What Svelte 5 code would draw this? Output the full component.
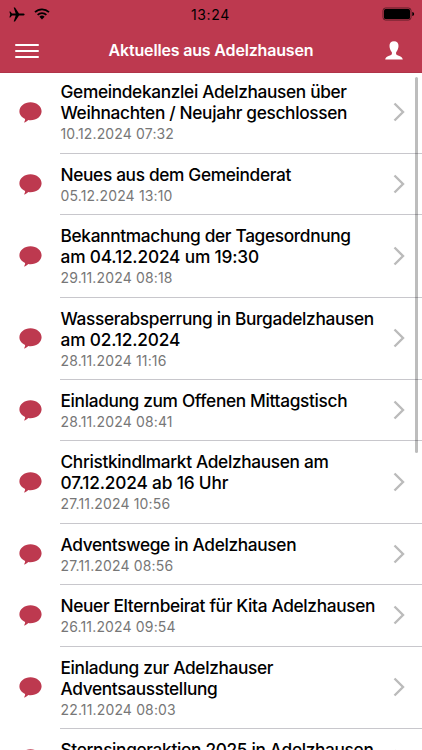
<script lang="ts">
  type NewsItem = { lines: string[]; date: string };

  const news: NewsItem[] = [
    { lines: ['Gemeindekanzlei Adelzhausen über', 'Weihnachten / Neujahr geschlossen'], date: '10.12.2024 07:32' },
    { lines: ['Neues aus dem Gemeinderat'], date: '05.12.2024 13:10' },
    { lines: ['Bekanntmachung der Tagesordnung', 'am 04.12.2024 um 19:30'], date: '29.11.2024 08:18' },
    { lines: ['Wasserabsperrung in Burgadelzhausen', 'am 02.12.2024'], date: '28.11.2024 11:16' },
    { lines: ['Einladung zum Offenen Mittagstisch'], date: '28.11.2024 08:41' },
    { lines: ['Christkindlmarkt Adelzhausen am', '07.12.2024 ab 16 Uhr'], date: '27.11.2024 10:56' },
    { lines: ['Adventswege in Adelzhausen'], date: '27.11.2024 08:56' },
    { lines: ['Neuer Elternbeirat für Kita Adelzhausen'], date: '26.11.2024 09:54' },
    { lines: ['Einladung zur Adelzhauser', 'Adventsausstellung'], date: '22.11.2024 08:03' },
    { lines: ['Sternsingeraktion 2025 in Adelzhausen'], date: '' }
  ];

  const hasDate = (line: string) => /\d\.\d/.test(line);
</script>

<div class="screen">
  <header>
    <div class="status-bar">
      <div class="status-left">
        <svg class="plane" viewBox="0 0 16 15" width="16" height="15">
          <path d="M15.6 7.500c0-.6-.7-1-1.700-1H10L6 .6H4.700l2 5.900H3L1.300 4.400H.4l.8 3.100-.8 3.100h.9L3 8.500h3.700l-2 5.900H6l4-5.900h3.900c1 0 1.700-.4 1.700-1z" />
        </svg>
        <svg class="wifi" viewBox="0 0 16 12" width="16" height="12">
          <path d="M1 4.200a10 10 0 0 1 14 0M3.600 6.900a6.200 6.200 0 0 1 8.800 0" />
          <path class="solid" d="M5.400 8.800a3.700 3.700 0 0 1 5.200 0L8 11.500z" />
        </svg>
      </div>
      <div class="clock">13:24</div>
      <div class="status-right">
        <svg viewBox="0 0 33 14" width="33" height="14">
          <rect class="shell" x="1" y="1" width="28" height="12" rx="2.500" />
          <rect x="2" y="2" width="26" height="10" rx="1.500" />
          <path d="M30.300 5c1.300.3 1.800 1 1.800 2s-.5 1.700-1.800 2z" />
        </svg>
      </div>
    </div>
    <div class="nav-bar">
      <button class="menu" aria-label="Menü">
        <span></span><span></span><span></span>
      </button>
      <h1>Aktuelles aus Adelzhausen</h1>
      <button class="profile" aria-label="Profil">
        <svg viewBox="0 0 18 19" width="18" height="19">
          <path d="M9 .3c3 0 4.600 1.900 4.500 4.800-.1 2.500-.9 4.500-2.200 5.900-.4.500-.3 2.300.3 2.800 1 .9 5.900 1.300 6.200 4.800H.2c.3-3.500 5.200-3.900 6.200-4.800.6-.5.7-2.300.3-2.800-1.300-1.400-2.100-3.400-2.200-5.900C4.400 2.200 6 .3 9 .3z" />
        </svg>
      </button>
    </div>
  </header>

  <main>
    {#each news as item}
      <article>
        <div class="bubble">
          <svg viewBox="0 0 23 21" width="23" height="21">
            <path d="M11.500.3C17.700.3 22.600 4.300 22.600 9.300s-4.900 9-11.100 9c-.7 0-1.500-.1-2.200-.2-1 1.200-2.600 2.200-4.400 2.500.7-1 1.200-2.300 1.200-3.600C2.700 15.500.4 12.600.4 9.300.4 4.300 5.300.3 11.500.3z" />
          </svg>
        </div>
        <div class="content">
          <div class="text">
            <h2>
              {#each item.lines as line}
                <span class:numeric={hasDate(line)}>{line}</span>
              {/each}
            </h2>
            <time>{item.date}</time>
          </div>
          <svg class="chevron" viewBox="0 0 12 20" width="12" height="20">
            <path d="M1.500 1.500 10 10l-8.500 8.500" />
          </svg>
        </div>
      </article>
    {/each}
    <div class="scrollbar"></div>
  </main>
</div>

<style>
  :global(body) {
    background: #fff;
    overflow: hidden;
  }

  .screen {
    width: 422px;
    height: 750px;
    display: flex;
    flex-direction: column;
    overflow: hidden;
    background: #fff;
    font-family: Inter, 'Liberation Sans', sans-serif;
  }

  header {
    height: 72.5px;
    flex-shrink: 0;
    box-sizing: border-box;
    background: #bd394f;
    border-bottom: 1px solid #b03449;
  }

  .status-bar {
    height: 28px;
    display: grid;
    grid-template-columns: 1fr auto 1fr;
    align-items: center;
    padding: 0 7px 0 9px;
  }

  .status-left {
    display: flex;
    align-items: center;
    gap: 9px;
  }

  .wifi {
    fill: none;
    stroke: #000;
    stroke-width: 1.7;
  }

  .wifi .solid {
    fill: #000;
    stroke: none;
  }

  .clock {
    font-size: 14px;
    letter-spacing: 0.7px;
    margin-right: 3px;
  }

  .status-right {
    display: flex;
    justify-content: flex-end;
  }

  .shell {
    fill: none;
    stroke: #5c1c27;
    stroke-width: 1;
  }

  .nav-bar {
    height: 44px;
    display: grid;
    grid-template-columns: 1fr auto 1fr;
    align-items: center;
    padding: 0 15px;
  }

  button {
    padding: 0;
    border: 0;
    background: none;
  }

  .menu {
    width: 24px;
    display: flex;
    flex-direction: column;
    gap: 4px;
    margin-top: 1px;
  }

  .menu span {
    height: 2px;
    border-radius: 1px;
    background: #fff;
  }

  h1 {
    margin: 0;
    font-size: 16px;
    font-weight: 600;
    letter-spacing: -0.17px;
    color: #fff;
    white-space: nowrap;
  }

  .profile {
    justify-self: end;
    display: flex;
    margin-right: 4px;
    fill: #fff;
  }

  main {
    position: relative;
    flex: 1;
    min-height: 0;
    overflow: hidden;
  }

  article {
    display: flex;
  }

  article:first-child {
    margin-top: -1px;
  }

  .bubble {
    width: 60px;
    flex-shrink: 0;
    display: flex;
    align-items: center;
    justify-content: center;
    fill: #bd394f;
  }

  .content {
    flex: 1;
    display: flex;
    align-items: center;
    justify-content: space-between;
    padding-right: 17px;
    border-bottom: 1px solid #c8c7cc;
  }

  .text {
    padding: 9.9px 0 8.5px 0.5px;
  }

  h2 {
    margin: 0;
    font-size: 17.3px;
    font-weight: 500;
    line-height: 21px;
    letter-spacing: -0.34px;
    color: #000;
  }

  h2 span {
    display: block;
    white-space: nowrap;
  }

  .numeric {
    letter-spacing: -0.17px;
  }

  time {
    display: block;
    height: 21px;
    font-size: 14px;
    line-height: 22px;
    letter-spacing: 0.15px;
    color: #777;
    white-space: nowrap;
  }

  .chevron {
    flex-shrink: 0;
    fill: none;
    stroke: #bbb;
    stroke-width: 2.4;
  }

  .scrollbar {
    position: absolute;
    top: 4px;
    right: 4px;
    width: 3px;
    height: 376px;
    border-radius: 2px;
    background: rgba(0, 0, 0, 0.26);
  }
</style>
